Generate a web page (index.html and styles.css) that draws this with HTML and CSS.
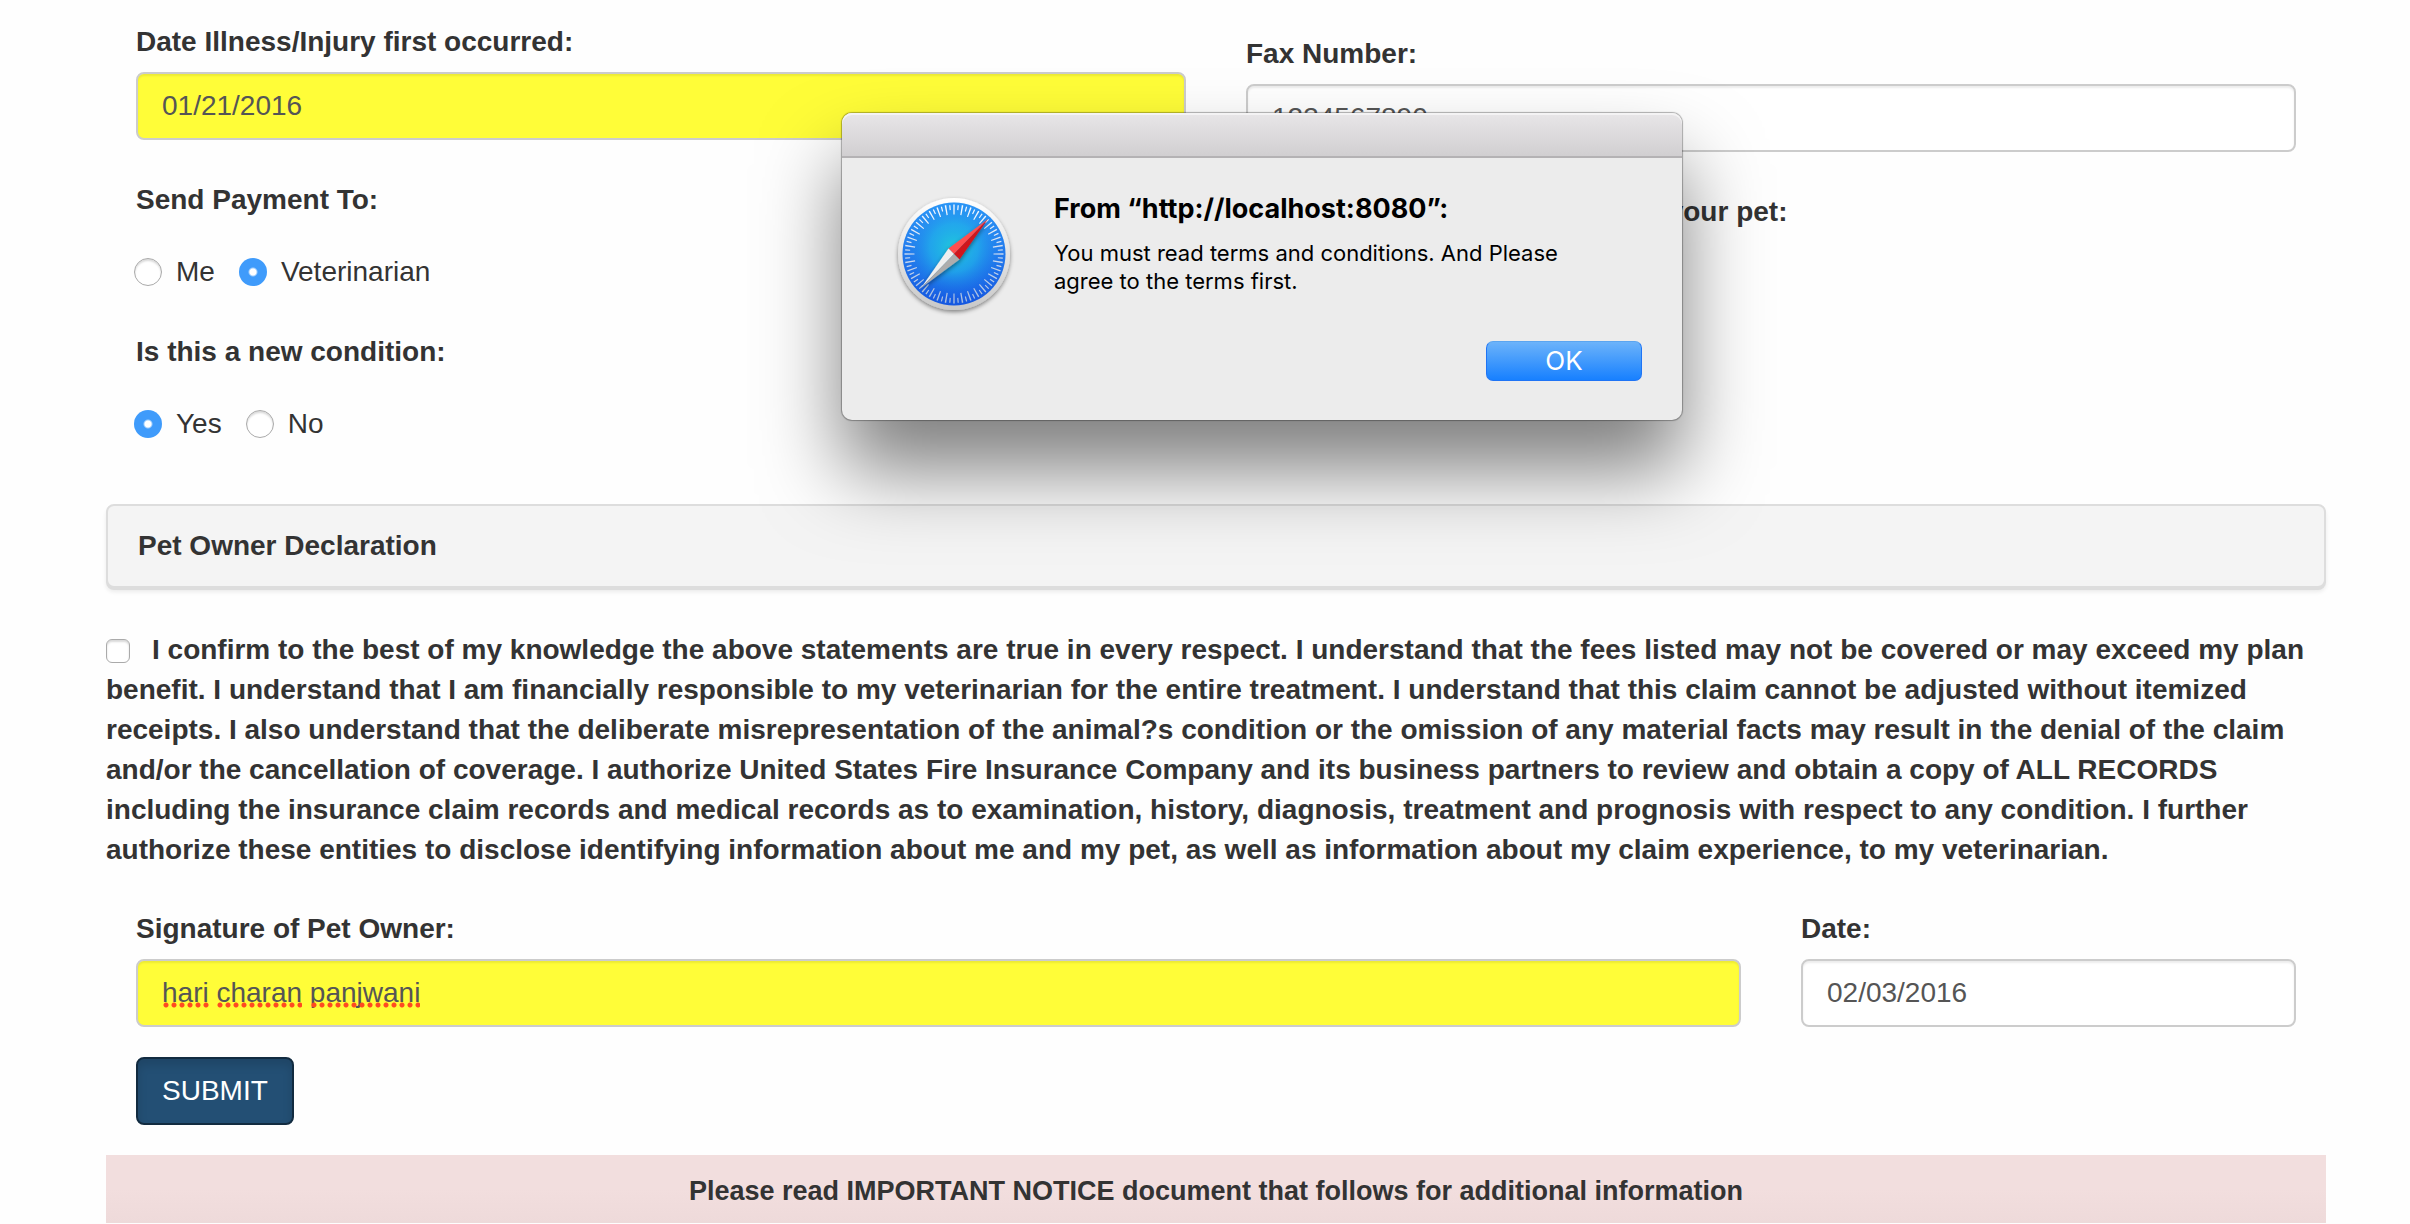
FILE: index.html
```html
<!DOCTYPE html>
<html lang="en">
<head>
<meta charset="utf-8">
<meta name="viewport" content="width=device-width, initial-scale=1">
<title>Pet Insurance Claim</title>
<link rel="stylesheet" href="styles.css">
</head>
<body>
<form class="claim">
  <div class="row">
    <div class="col">
      <div class="field">
        <label class="caption" for="occurred">Date Illness/Injury first occurred:</label>
        <input class="input input-required" id="occurred" type="text" value="01/21/2016">
      </div>
      <fieldset class="choice">
        <legend class="caption">Send Payment To:</legend>
        <div class="options">
          <label class="option"><input class="radio" type="radio" name="payee">Me</label>
          <label class="option"><input class="radio" type="radio" name="payee" checked>Veterinarian</label>
        </div>
      </fieldset>
      <fieldset class="choice">
        <legend class="caption">Is this a new condition:</legend>
        <div class="options">
          <label class="option"><input class="radio" type="radio" name="newcondition" checked>Yes</label>
          <label class="option"><input class="radio" type="radio" name="newcondition">No</label>
        </div>
      </fieldset>
    </div>
    <div class="col col-lower">
      <div class="field">
        <label class="caption" for="fax">Fax Number:</label>
        <input class="input" id="fax" type="text" value="1234567890">
      </div>
      <p class="caption">List all extra insurance held for your pet:</p>
    </div>
  </div>

  <h2 class="panel-title">Pet Owner Declaration</h2>

  <label class="declaration"><input class="checkbox" type="checkbox">I confirm to the best of my knowledge the above statements are true in every respect. I understand that the fees listed may not be covered or may exceed my plan benefit. I understand that I am financially responsible to my veterinarian for the entire treatment. I understand that this claim cannot be adjusted without itemized receipts. I also understand that the deliberate misrepresentation of the animal?s condition or the omission of any material facts may result in the denial of the claim and/or the cancellation of coverage. I authorize United States Fire Insurance Company and its business partners to review and obtain a copy of ALL RECORDS including the insurance claim records and medical records as to examination, history, diagnosis, treatment and prognosis with respect to any condition. I further authorize these entities to disclose identifying information about me and my pet, as well as information about my claim experience, to my veterinarian.</label>

  <div class="row row-signature">
    <div class="col">
      <label class="caption" for="signature">Signature of Pet Owner:</label>
      <div class="spelled">
        <input class="input input-required" id="signature" type="text" value="hari charan panjwani" spellcheck="false">
        <span class="spelling" aria-hidden="true"><u>hari</u> <u>charan</u> <u>panjwani</u></span>
      </div>
    </div>
    <div class="col">
      <label class="caption" for="signed">Date:</label>
      <input class="input" id="signed" type="text" value="02/03/2016">
    </div>
  </div>
  <div class="actions"><button class="submit" type="button">SUBMIT</button></div>
  <p class="notice">Please read IMPORTANT NOTICE document that follows for additional information</p>
</form>

<div class="alert" role="alertdialog" aria-labelledby="alert-title" aria-describedby="alert-text">
  <div class="alert-bar"></div>
  <div class="alert-body">
    <svg class="alert-icon" viewBox="0 0 128 128" aria-hidden="true">
      <defs>
        <linearGradient id="rim" x1="0" y1="0" x2="0" y2="1"><stop offset="0" stop-color="#fff"/><stop offset="1" stop-color="#c8c8c8"/></linearGradient>
        <linearGradient id="sky" x1="0" y1="0" x2="0" y2="1"><stop offset="0" stop-color="#2f9bf8"/><stop offset="1" stop-color="#1557e0"/></linearGradient>
        <radialGradient id="glow" cx=".5" cy=".44" r=".52"><stop offset="0" stop-color="#1fc8dc"/><stop offset=".45" stop-color="#20b0ea" stop-opacity=".75"/><stop offset="1" stop-color="#1e70f0" stop-opacity="0"/></radialGradient>
        <linearGradient id="ticks" x1="0" y1="0" x2="0" y2="1"><stop offset="0" stop-color="#f2f8ff"/><stop offset="1" stop-color="#a9bfe0"/></linearGradient>
        <filter id="soft" x="-20%" y="-20%" width="140%" height="150%"><feDropShadow dx="0" dy="2" stdDeviation="2" flood-opacity=".45"/></filter>
      </defs>
      <circle cx="64" cy="64" r="56" fill="url(#rim)" filter="url(#soft)"/>
      <circle cx="64" cy="64" r="51.500" fill="url(#sky)"/>
      <circle cx="64" cy="64" r="51.500" fill="url(#glow)"/>
      <circle cx="64" cy="64" r="44.500" fill="none" stroke="url(#ticks)" stroke-width="10" pathLength="360" stroke-dasharray="1.700 8.300" stroke-dashoffset=".850"/>
      <circle cx="64" cy="64" r="46.500" fill="none" stroke="url(#ticks)" stroke-width="5" pathLength="360" stroke-dasharray="1.500 8.500" stroke-dashoffset="-4.250"/>
      <g filter="url(#soft)">
        <path d="M98 29 58.500 58.500 64 64z" fill="#ff4f4f"/>
        <path d="M98 29 69.500 69.500 64 64z" fill="#d0171f"/>
        <path d="M31 98 58.500 58.500 64 64z" fill="#efefef"/>
        <path d="M31 98 69.500 69.500 64 64z" fill="#adadad"/>
      </g>
    </svg>
    <div class="alert-copy">
      <h1 class="alert-title" id="alert-title">From “http://localhost:8080”:</h1>
      <p class="alert-text" id="alert-text">You must read terms and conditions. And Please agree to the terms first.</p>
      <button class="alert-ok" type="button">OK</button>
    </div>
  </div>
</div>
</body>
</html>
```
FILE: styles.css
```css
* { box-sizing: border-box; }

body {
  margin: 0;
  background: #fefefe;
  color: #333;
  font: 28px/40px "Helvetica Neue", "Liberation Sans", Arial, sans-serif;
}

.claim { padding: 22px 84px 0 106px; }

.row { display: grid; grid-template-columns: 1fr 1fr; }
.row-signature { grid-template-columns: 3fr 1fr; margin-top: 39px; }
.col { min-width: 0; padding: 0 30px; }
.col-lower { padding-top: 12px; }

.caption {
  display: block;
  margin: 0 0 10px;
  padding: 0;
  font-weight: bold;
}

.field { margin-bottom: 40px; }

.input {
  display: block;
  width: 100%;
  height: 68px;
  padding: 12px 24px;
  border: 2px solid #ccc;
  border-radius: 8px;
  background: #fff;
  box-shadow: inset 0 2px 2px rgba(0, 0, 0, .075);
  color: #555;
  font: inherit;
}
.input-required { background: #fffd38; }

.choice { margin: 0 0 40px; padding: 0; border: 0; }
.choice .caption { margin-bottom: 32px; }
.options { display: flex; gap: 24px; margin-left: -2px; }
.option { display: flex; align-items: center; gap: 14px; }

.radio, .checkbox {
  flex: none;
  width: 28px;
  height: 28px;
  margin: 0;
  border: 1px solid #aaa;
  border-radius: 50%;
  background: #fff;
  box-shadow: inset 0 2px 2px rgba(0, 0, 0, .15);
  appearance: none;
}
.radio:checked {
  border: 0;
  background: radial-gradient(circle, #fff 3px, #3f9bfb 5px);
  box-shadow: none;
}
.checkbox {
  width: 24px;
  height: 24px;
  margin-right: 22px;
  border-radius: 6px;
  vertical-align: -4px;
}

.panel-title {
  margin: 20px 0 42px;
  padding: 20px 30px;
  border: 2px solid #ddd;
  border-radius: 8px;
  background: #f4f4f4;
  box-shadow: 0 2px 0 #ddd, 0 4px 4px rgba(0, 0, 0, .08);
  font-size: 28px;
  line-height: 40px;
}

.declaration { display: block; font-weight: bold; }

.spelled { position: relative; }
.spelling {
  position: absolute;
  top: 14px;
  left: 26px;
  color: transparent;
  pointer-events: none;
}
.spelling u {
  background: radial-gradient(circle, #ff4a20 2px, transparent 3px) 0 bottom / 8px 6px repeat-x;
  text-decoration: none;
}

.actions { padding: 30px; }
.submit {
  display: block;
  height: 68px;
  padding: 12px 24px;
  border: 2px solid #122b40;
  border-radius: 8px;
  background: #234f74;
  box-shadow: inset 0 6px 10px rgba(0, 0, 0, .125);
  color: #fff;
  font: inherit;
}

.notice {
  margin: 0;
  padding: 16px 30px 12px;
  background: linear-gradient(#f2dede 50%, #eedada);
  font-size: 27px;
  font-weight: bold;
  text-align: center;
}

.alert {
  position: absolute;
  top: 113px;
  left: 842px;
  width: 840px;
  border-radius: 10px;
  background: #ececec;
  box-shadow: 0 0 1px 1px rgba(0, 0, 0, .3), 0 50px 80px rgba(0, 0, 0, .5);
  color: #000;
  font-family: Inter, sans-serif;
}
.alert-bar {
  height: 45px;
  border-bottom: 2px solid #b4b2b4;
  border-radius: 10px 10px 0 0;
  background: linear-gradient(#e8e6e8, #d1cfd1);
  box-shadow: inset 0 2px 0 #f4f3f4;
}
.alert-body { display: flex; gap: 36px; padding: 32px 40px 39px 48px; }
.alert-icon { flex: none; width: 128px; height: 128px; }
.alert-copy { display: flex; flex: 1; flex-direction: column; }
.alert-title { margin: 3px 0 14px; font-size: 27px; line-height: 32px; }
.alert-text { max-width: 530px; margin: 0; font-size: 22px; line-height: 28px; }
.alert-ok {
  align-self: flex-end;
  width: 156px;
  height: 40px;
  margin-top: 46px;
  border: 1px solid #1f74f5;
  border-top-color: #5ba5f0;
  border-radius: 7px;
  background: linear-gradient(#6cb3fa, #1780ff);
  color: #fff;
  font: 26px/32px Inter, sans-serif;
}
```
